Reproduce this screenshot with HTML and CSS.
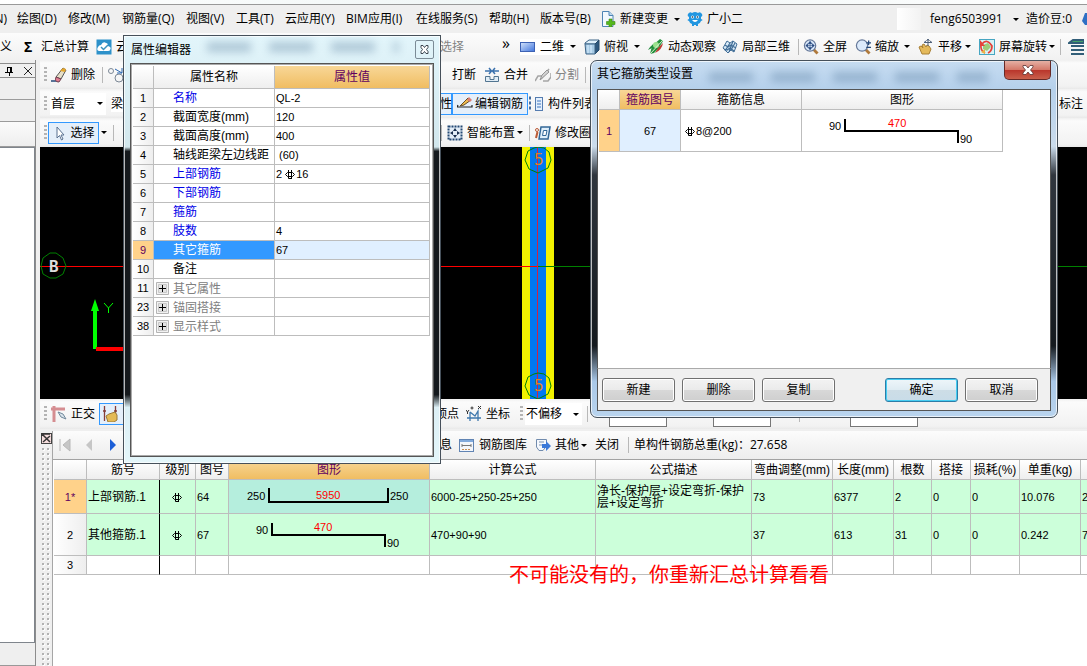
FILE: index.html
```html
<!DOCTYPE html>
<html lang="zh-CN">
<head>
<meta charset="utf-8">
<title>钢筋算量</title>
<link rel="stylesheet" href="styles.css">
</head>
<body>
<svg class="defs" aria-hidden="true">
  <defs>
    <linearGradient id="blue" x1="0" y1="0" x2="1" y2="1"><stop offset="0" stop-color="#d5e4fb"/><stop offset="1" stop-color="#3f74dc"/></linearGradient>
    <symbol id="rebar" viewBox="0 0 11 11"><path d="M2.500 3.500H7.500L9.500 5.500L7.500 7.500H2.500L.5 5.500ZM3.500 1V9.500H6.500M6.500 1V10" fill="none" stroke="currentColor"/></symbol>
    <symbol id="plus" viewBox="0 0 13 13"><path d="M.5 .5H12.500V12.500H.5Z" fill="#f2f2f2" stroke="#b4b4b4"/><path d="M2.500 2.500H10.500V10.500H2.500Z" fill="#e4e4e4" stroke="#c8c8c8"/><path d="M3 6.500H10M6.500 3V10" stroke="#000"/></symbol>
    <symbol id="magnifier" viewBox="0 0 17 17"><path d="M11 11L15.500 15.500" stroke="#b07a3c" stroke-width="3"/><circle cx="7.500" cy="7" r="6" fill="#dceafb" stroke="#66799a" stroke-width="1.300"/></symbol>
    <pattern id="dots" width="5" height="5" patternUnits="userSpaceOnUse"><rect x="1" y="1" width="2" height="2" fill="#b2b2b2"/><path d="M3.500 2V3.500H2" fill="none" stroke="#fff"/></pattern>
  </defs>
</svg>
<div class="app">
  <div class="strip"></div>
  <nav class="menubar">
    <button class="cut">N)</button><button>绘图(D)</button><button>修改(M)</button><button>钢筋量(Q)</button><button>视图(V)</button><button>工具(T)</button><button>云应用(Y)</button><button>BIM应用(I)</button><button>在线服务(S)</button><button>帮助(H)</button><button>版本号(B)</button>
    <button><svg class="icon" viewBox="0 0 16 16"><path d="M2.500 .5H9L13 4.500V15.500H2.500Z" fill="#f2f8fe" stroke="#4e84b4"/><path d="M9 .5V4.500H13" fill="#bdd8ef" stroke="#4e84b4"/><path d="M9 8H12V10.500H15V13.500H12V16H9V13.500H6.500V10.500H9Z" fill="#55b81b" stroke="#3d8c15" stroke-width=".6"/></svg>新建变更</button><i class="arrow"></i>
    <button><svg class="icon" viewBox="0 0 16 16"><path d="M1 3Q3 0 5 2Q8 0 11 2Q13 0 15 3Q16 5 14 6V8Q17 9 14 10Q13 13 11 13V15H9V14H7V15H5V13Q3 13 2 10Q-1 9 2 8V6Q0 5 1 3Z" fill="#2296e0"/><circle cx="5.500" cy="6" r="1.500" fill="#fff"/><circle cx="10.500" cy="6" r="1.500" fill="#fff"/><circle cx="5.500" cy="6" r=".8" fill="#123"/><circle cx="10.500" cy="6" r=".8" fill="#123"/><path d="M5 9Q8 13 11 9Z" fill="#fff"/></svg>广小二</button>
    <span class="user-gap"></span><button>feng6503991</button><i class="arrow"></i><button>造价豆:0</button><svg class="icon" viewBox="0 0 16 16"><path d="M0 10L3 2H8V14H3Z" fill="#2d6fc4"/></svg>
  </nav>

  <div class="viewbar">
    <button>义</button><button class="sigma">Σ</button><button>汇总计算</button>
    <button><svg class="icon" viewBox="0 0 16 16"><rect x=".5" y=".5" width="15" height="15" fill="#2d91ca"/><path d="M3 12Q0 11 2 8Q3 6 5 6Q7 2 10 4Q12 4 12 7Q16 8 14 11Q14 12 12 12Z" fill="#fff"/><path d="M5 8L7.500 10.500L12 6" fill="none" stroke="#3a91bd" stroke-width="1.500"/></svg>云</button>
    <button class="muted">选择</button><span class="more">»</span>
    <button class="lit"><svg class="icon" viewBox="0 0 16 16"><rect x=".5" y="3.500" width="14" height="9" fill="url(#blue)" stroke="#3d62b4"/></svg>二维</button><i class="arrow"></i>
    <button><svg class="icon" viewBox="0 0 16 16"><path d="M1 4L5 1H15L11 5H1Z" fill="#dff0fb" stroke="#3d6487"/><path d="M11 5L15 1V11L11 15Z" fill="#2d587e" stroke="#254968"/><path d="M1 5H11V15H2Z" fill="#a7cae4" stroke="#3d6487"/><path d="M4 6V14M7 6V14" stroke="#dbefff"/></svg>俯视</button><i class="arrow"></i>
    <button><svg class="icon" viewBox="0 0 16 16"><path d="M2 15L4 7L12 0L15 2L11 9L6 14Z" fill="#24913d"/><path d="M0 11Q4 4 11 3L6 8Z" fill="#238d3d"/><path d="M15 4Q14 11 7 14L10 9Z" fill="#bf3c33"/><circle cx="8" cy="6" r="3" fill="#9be28e"/><path d="M2 15L15 1" stroke="#d9eed0"/></svg>动态观察</button>
    <button><svg class="icon" viewBox="0 0 16 16"><path d="M1 9L5 2L8 4L11 2L15 5L12 13L9 11L6 14Z" fill="#d8eaf8" stroke="#416d96"/><path d="M3 6L6 8L9 6L14 9M2 10L5 11L8 9L12 12M8 4L3 12M11 2L7 13M13 4L9 11" fill="none" stroke="#416d96" stroke-width="1.200"/></svg>局部三维</button><i class="sep"></i>
    <button><svg class="icon" viewBox="0 0 17 17"><use href="#magnifier"/><path d="M3.500 7H11.500M7.500 3V11M3 7L5 5V9ZM12 7L10 5V9ZM7.500 2.500L5.500 5H9.500ZM7.500 11.500L5.500 9H9.500Z" fill="#25477f" stroke="#25477f" stroke-width=".6"/></svg>全屏</button>
    <button><svg class="icon" viewBox="0 0 17 17"><use href="#magnifier"/><path d="M12 4H17M14.500 1.500V6.500M12 9H17" stroke="#244879" stroke-width="1.300"/></svg>缩放</button><i class="arrow"></i>
    <button><svg class="icon" viewBox="0 0 16 16"><path d="M1 8L3 7L5 9L4 6L6 5L8 8L9 6L11 7L13 10L11 15H4Z" fill="#e4b95a" stroke="#a98035"/><path d="M6 3.500H14M10 0V7M6 3.500L8 2M14 3.500L12 2M10 0L8.500 2M10 0L11.500 2" stroke="#50627b" fill="none"/></svg>平移</button><i class="arrow"></i>
    <button><svg class="icon" viewBox="0 0 16 16"><rect x=".5" y=".5" width="15" height="15" fill="#d9f3f6" stroke="#47a6c2"/><path d="M4 6L9 4L12 8L8 12L4 10Z" fill="#9dcc7a"/><path d="M3 5Q8 -1 13 7Q13 12 9 14M2 6Q1 11 6 14" fill="none" stroke="#e5413a" stroke-width="1.700"/><path d="M1 1V7H6Z" fill="#e5413a"/><path d="M2 13L6 10V15Z" fill="#ecb244"/></svg>屏幕旋转</button><i class="arrow"></i><i class="sep"></i>
    <svg class="icon" viewBox="0 0 16 16"><path d="M5 1H16V4H1ZM3 7H16M3 11H16M3 15H16" stroke="#315e78" stroke-width="2" fill="#45a46a"/></svg>
  </div>

  <div class="main">
    <aside class="dock">
      <header><svg class="icon" viewBox="0 0 16 16"><path d="M5.500 4V9M8.500 4V9M5 4.500H10M3 9.500H11M7.500 10V13" fill="none" stroke="#000"/><path d="M9 4V9" stroke="#000" stroke-width="2"/></svg><svg class="icon" viewBox="0 0 16 16"><path d="M4 4L12 12M12 4L4 12" stroke="#222"/></svg></header>
      <div class="dock-tab"></div><div class="dock-tab"></div><div class="dock-tab fade"></div>
      <div class="dock-list"></div>
      <div class="dock-foot"></div>
    </aside>

    <section class="work">
      <div class="tools edit-tools">
        <i class="grip"></i><button><svg class="icon" viewBox="0 0 16 16"><path d="M0 14H8" stroke="#244879" stroke-width="1.500"/><path d="M5 10L12 1L15 3L10 12Z" fill="#e6dfc7" stroke="#555"/><path d="M9 4L14 5L15 2L12 1Z" fill="#e2a52d"/><path d="M5 10L10 12L8 15Q3 15 5 10Z" fill="#e17d92" stroke="#704150"/></svg>删除</button><i class="sep"></i>
        <svg class="icon" viewBox="0 0 16 16"><circle cx="3" cy="4" r="2.500" fill="none" stroke="#7b8795"/><circle cx="11" cy="11" r="4" fill="none" stroke="#7b8795"/><path d="M7 2L14 6M14 1V6H9" stroke="#2a66b0" fill="none"/></svg>
        <svg class="icon" viewBox="0 0 16 16"><path d="M1 4H7M5 1L7.500 4L5 7" fill="none" stroke="#366eac" stroke-width="1.500"/><path d="M-6 9.500H6V14.500H-6Z" fill="#e4f0fa" stroke="#587b99"/></svg><button>打断</button>
        <button><svg class="icon" viewBox="0 0 16 16"><path d="M1 4H7M5 1L7.500 4L5 7M15 4H9M11 1L8.500 4L11 7" fill="none" stroke="#3b71ad" stroke-width="1.500"/><path d="M1.500 9.500H6V12.500H10V9.500H14.500V14.500H1.500Z" fill="#e1edf6" stroke="#527591"/></svg>合并</button>
        <button class="muted"><svg class="icon" viewBox="0 0 16 16"><path d="M0 14L3 9H7M6 12L14 2M8 14H13L16 10V6" fill="none" stroke="#a5a5a5" stroke-width="1.500"/><path d="M5 13L7 8L12 3L14 5Z" fill="#d3d3d3" stroke="#969696"/></svg>分割</button><i class="sep"></i>
      </div>
      <div class="tools member-tools">
        <i class="grip"></i><label class="pick"><select aria-label="楼层"><option>首层</option></select><i class="arrow"></i></label><button class="lit">梁</button>
        <button class="on">属性</button>
        <button class="on"><svg class="icon" viewBox="0 0 16 16"><path d="M1 9L0 11H15V9" stroke="#222" stroke-width="1.200" fill="none"/><path d="M3 10L11 2L14 4L7 9Z" fill="#f0bc4e" stroke="#664d28"/><path d="M10 4L12 1L15 4L13 6Z" fill="#db7e75"/></svg>编辑钢筋</button>
        <button><svg class="icon" viewBox="0 0 16 16"><path d="M1 2H4M1 7H4M1 12H4" stroke="#456c9d" stroke-width="3" stroke-dasharray="2 1"/><rect x="7.500" y="1.500" width="7" height="13" fill="#e4f0fd" stroke="#557cb0"/><path d="M9 5H13M9 8H13M9 11H13" stroke="#3f75bd"/></svg>构件列表</button>
        <button class="cut">标注</button>
      </div>
      <div class="tools draw-tools">
        <i class="grip"></i><button class="on"><svg class="icon" viewBox="0 0 16 16"><path d="M5 2V13L7.500 10.500L9.500 15L11 14L9 10H12Z" fill="#fff" stroke="#587090"/></svg>选择</button><i class="arrow"></i><i class="sep"></i>
        <i class="sep"></i><button><svg class="icon" viewBox="0 0 16 16"><rect x="1.500" y="1.500" width="13" height="13" fill="#e3edf7" stroke="#234974" stroke-width="2" stroke-dasharray="2 1"/><path d="M8 3L10 6H6ZM8 13L10 10H6ZM3 8L6 6V10ZM13 8L10 6V10Z" fill="#172d4d"/></svg>智能布置</button><i class="arrow"></i><i class="sep"></i>
        <button><svg class="icon" viewBox="0 0 16 16"><path d="M6 2H15L13 14H4Z" fill="#dfeffb" stroke="#326797" stroke-width="1.500"/><path d="M8.500 5.500H12L11 10.500H7.500Z" fill="#fff" stroke="#326797"/><circle cx="2" cy="5" r="1.500" fill="none" stroke="#ba5a35"/><path d="M2.500 7L1 13" stroke="#ba5a35" stroke-width="2"/></svg>修改圈</button>
      </div>
      <div class="canvas">
        <svg width="1047" height="252" viewBox="0 0 1047 252">
          <rect x="482" width="32" height="252" fill="#f2f200"/><rect x="490" width="16" height="252" fill="#0078f0"/>
          <path d="M0 119.500H497" stroke="#f00"/><path d="M498 119.500H1047" stroke="#008000"/><path d="M497.500 0V252" stroke="#d42040"/>
          <g fill="none" stroke="#008000"><path d="M488 4L494 1L498 0L504 1L509 5L511 13L508 21L498 26L489 22L485 13Z"/><path d="M488 230L494 227L498 226L504 227L509 231L511 239L508 247L498 252L489 248L485 239Z"/><path d="M1 119L3 111L10 106H16L23 111L26 119L23 127L16 131L10 131L3 127Z"/></g>
          <g class="axis"><text x="494" y="18" fill="#d9822b">5</text><text x="494" y="244" fill="#d9822b">5</text><text x="9" y="125" fill="#ddd" class="strong">B</text></g>
          <path d="M55 160V202" stroke="#0f0" stroke-width="4"/><path d="M55 152L59 164H51Z" fill="#0f0"/><path d="M56 202H110" stroke="#f00" stroke-width="4"/><path d="M64 156L68.500 161L73 156M68.500 161V166" fill="none" stroke="#0f0"/>
        </svg>
      </div>
      <div class="tools snap-tools">
        <i class="grip"></i><button><svg class="icon" viewBox="0 0 16 16"><path d="M0 3H14M3 0V16" stroke="#d58d91" stroke-width="3"/><path d="M7 6L12 8L15 13L10 11Z" fill="#d8e2ea" stroke="#71899b"/></svg>正交</button>
        <button class="on snap" aria-label="捕捉"><svg class="icon" viewBox="0 0 16 16"><path d="M2.500 0V15M13.500 0V8M1 5H4M12 5H15" stroke="#853d39" stroke-width="1.300"/><path d="M4 10L7 8L13 6L15 9V14L12 16H6Z" fill="#e4ba55" stroke="#9b7938"/></svg></button>
        <button>顶点</button><button><svg class="icon" viewBox="0 0 16 16"><path d="M4 6V15M1 12H15M4 6L9 10L12 5V15" fill="none" stroke="#3f78ad" stroke-width="1.300"/><path d="M0 4L1.500 6L3 4M1.500 6V8M12 0L15 3M15 0L12 3" fill="none" stroke="#333"/><circle cx="6" cy="2" r="1" fill="none" stroke="#333"/></svg>坐标</button>
        <i class="grip"></i><label class="pick"><select aria-label="偏移"><option>不偏移</option></select><i class="arrow"></i></label><i class="sep"></i>
        <input class="num" aria-label="X"><input class="num" aria-label="Y"><i class="sep"></i><input class="num wide" aria-label="旋转角度">
      </div>

      <div class="rebar">
        <div class="splitter"><svg class="icon" viewBox="0 0 11 11"><rect x=".5" y=".5" width="10" height="10" fill="#f6dddd" stroke="#444"/><path d="M1 3V1H9M2 2L9 9M9 3L2 9" stroke="#333" stroke-width="1.500" fill="none"/></svg><svg class="dots"><rect width="100%" height="100%" fill="url(#dots)"/></svg></div>
        <div class="rebar-body">
          <div class="rebar-tools">
            <svg class="icon" viewBox="0 0 14 14"><path d="M2 1V13M12 1L5 7L12 13Z" fill="#c6c6c6" stroke="#b8b8b8"/></svg>
            <svg class="icon" viewBox="0 0 14 14"><path d="M10 1L4 7L10 13Z" fill="#c6c6c6"/></svg>
            <svg class="icon" viewBox="0 0 14 14"><path d="M4 1L10 7L4 13Z" fill="#1c5fd7"/></svg>
            <button>信息</button>
            <button><svg class="icon" viewBox="0 0 16 16"><rect x=".5" y="2.500" width="14" height="12" fill="#f3f6fb" stroke="#6184b3"/><path d="M1 3H14V5H1Z" fill="#80a9dc"/><path d="M3 7V10M3 8.500H12M12 7V10" stroke="#777" fill="none"/><path d="M3 12.500H12" stroke="#c88d52" stroke-dasharray="2 1"/></svg>钢筋图库</button>
            <button><svg class="icon" viewBox="0 0 16 16"><path d="M1.500 2.500H11.500V9L8 13.500H4L1.500 10Z" fill="#f5f8fd" stroke="#718bad"/><path d="M4 5H9M4 8H8" stroke="#7b91ae"/><path d="M7 7H11V4L16 9L11 14V11H7Z" fill="#3b79d8"/></svg>其他</button><i class="arrow"></i>
            <button>关闭</button><i class="sep"></i><span>单构件钢筋总重(kg)：27.658</span>
          </div>
          <table class="grid">
            <colgroup><col class="w33"><col class="w73"><col class="w36"><col class="w33"><col class="w201"><col class="w166"><col class="w156"><col class="w81"><col class="w61"><col class="w38"><col class="w39"><col class="w49"><col class="w61"><col></colgroup>
            <thead><tr><th></th><th>筋号</th><th>级别</th><th>图号</th><th class="hot">图形</th><th>计算公式</th><th>公式描述</th><th>弯曲调整(mm)</th><th>长度(mm)</th><th>根数</th><th>搭接</th><th>损耗(%)</th><th>单重(kg)</th><th></th></tr></thead>
            <tbody>
              <tr class="green h34"><th class="cur">1*</th><td class="name">上部钢筋.1</td><td class="mid"><svg class="rb"><use href="#rebar"/></svg></td><td>64</td><td class="pic teal"><svg width="200" height="33"><path d="M40 8V22H159V8" class="bar"/><text x="18" y="20">250</text><text x="87" y="19" class="red">5950</text><text x="161" y="20">250</text></svg></td><td>6000-25+250-25+250</td><td class="wrap">净长-保护层+设定弯折-保护层+设定弯折</td><td>73</td><td>6377</td><td>2</td><td>0</td><td>0</td><td>10.076</td><td>2</td></tr>
              <tr class="green h42"><th>2</th><td class="name">其他箍筋.1</td><td class="mid"><svg class="rb"><use href="#rebar"/></svg></td><td>67</td><td class="pic"><svg width="200" height="41"><path d="M43 9V21H156V33" class="bar"/><text x="27" y="20">90</text><text x="85" y="17" class="red">470</text><text x="158" y="33">90</text></svg></td><td>470+90+90</td><td></td><td>37</td><td>613</td><td>31</td><td>0</td><td>0</td><td>0.242</td><td>7</td></tr>
              <tr class="h19"><th>3</th><td class="name"></td><td></td><td></td><td></td><td></td><td></td><td></td><td></td><td></td><td></td><td></td><td></td><td></td></tr>
            </tbody>
          </table>
        </div>
      </div>
    </section>
  </div>

  <section class="window props" aria-label="属性编辑器">
    <header><h2>属性编辑器</h2><i class="ghost"></i><button class="mini" aria-label="关闭"><svg width="9" height="9" viewBox="0 0 9 9"><path d="M1 .5H3L4.500 2.500L6 .5H8V2.500L6.500 4.500L8 6.500V8.500H6L4.500 6.500L3 8.500H1V6.500L2.500 4.500L1 2.500Z" fill="#fff" stroke="#3d4650"/></svg></button></header>
    <div class="pane">
      <table class="grid">
        <colgroup><col class="w21"><col class="w121"><col class="w155"></colgroup>
        <thead><tr><th></th><th>属性名称</th><th class="hot">属性值</th></tr></thead>
        <tbody>
          <tr><th>1</th><td class="link">名称</td><td>QL-2</td></tr>
          <tr><th>2</th><td>截面宽度(mm)</td><td>120</td></tr>
          <tr><th>3</th><td>截面高度(mm)</td><td>400</td></tr>
          <tr><th>4</th><td>轴线距梁左边线距</td><td>&nbsp;(60)</td></tr>
          <tr><th>5</th><td class="link">上部钢筋</td><td>2 <svg class="rb"><use href="#rebar"/></svg>16</td></tr>
          <tr><th>6</th><td class="link">下部钢筋</td><td></td></tr>
          <tr><th>7</th><td class="link">箍筋</td><td></td></tr>
          <tr><th>8</th><td class="link">肢数</td><td>4</td></tr>
          <tr class="picked"><th class="cur">9</th><td>其它箍筋</td><td>67</td></tr>
          <tr><th>10</th><td>备注</td><td></td></tr>
          <tr class="fold"><th>11</th><td><button aria-label="展开"><svg width="13" height="13"><use href="#plus"/></svg></button>其它属性</td><td></td></tr>
          <tr class="fold"><th>23</th><td><button aria-label="展开"><svg width="13" height="13"><use href="#plus"/></svg></button>锚固搭接</td><td></td></tr>
          <tr class="fold"><th>38</th><td><button aria-label="展开"><svg width="13" height="13"><use href="#plus"/></svg></button>显示样式</td><td></td></tr>
        </tbody>
      </table>
    </div>
  </section>

  <section class="window stirrup" role="dialog" aria-label="其它箍筋类型设置">
    <header><h2>其它箍筋类型设置</h2><i class="ghost"></i><button class="close" aria-label="关闭"><svg width="12" height="10" viewBox="0 0 12 10"><path d="M1 .5H4L6 3L8 .5H11V2L8.500 5L11 8V9.500H8L6 7L4 9.500H1V8L3.500 5L1 2Z" fill="#fff" stroke="#5b3434" stroke-width=".8"/></svg></button></header>
    <div class="pane">
      <table class="grid">
        <colgroup><col class="w21"><col class="w61"><col class="w121"><col class="w201"></colgroup>
        <thead><tr><th></th><th class="hot">箍筋图号</th><th>箍筋信息</th><th>图形</th></tr></thead>
        <tbody><tr class="h42"><th class="cur">1</th><td class="mid pale">67</td><td><svg class="rb"><use href="#rebar"/></svg>8@200</td><td class="pic"><svg width="200" height="41"><path d="M43 9V21H156V33" class="bar"/><text x="27" y="20">90</text><text x="86" y="17" class="red">470</text><text x="158" y="33">90</text></svg></td></tr></tbody>
      </table>
    </div>
    <footer><button>新建</button><button>删除</button><button>复制</button><span></span><button class="default">确定</button><button>取消</button></footer>
  </section>

  <p class="note">不可能没有的，你重新汇总计算看看</p>
</div>
</body>
</html>
```

FILE: styles.css
```css
* { box-sizing: border-box; }
body { margin: 0; background: #efefef; color: #000; font: 12px/16px "Open Sans", "Noto Sans CJK SC", sans-serif; }
button, select, input { font: inherit; color: inherit; margin: 0; padding: 0; border: 0; background: none; border-radius: 0; }
button { display: flex; align-items: center; gap: 4px; white-space: nowrap; text-align: left; }
h2 { margin: 0; font-size: 12px; font-weight: 400; }
.defs { position: absolute; width: 0; height: 0; }
.app { position: relative; display: flex; flex-direction: column; min-height: 100vh; overflow: hidden; }
.strip { height: 5px; background: linear-gradient(90deg, #fff, #eef5f5 50%, #fff); border-bottom: 1px solid #999; }
.icon { width: 16px; height: 16px; flex: none; }
.muted { color: #838383; }
.arrow { width: 0; height: 0; border: 3px solid transparent; border-top-color: #000; border-bottom: 0; flex: none; }
.sep { width: 1px; height: 16px; background: #b8b8b8; }
.grip { width: 3px; height: 16px; background: repeating-linear-gradient(#b4b4b4 0 2px, transparent 2px 4px); }

.menubar, .viewbar, .tools, .rebar-tools { display: grid; align-items: center; overflow: hidden; white-space: nowrap; }
.menubar { height: 28px; grid-template-columns: 17px 51px 54px 64px 50px 49px 61px 70px 73px 51px 60px 74px 13px 210px 33px 83px 13px 56px 16px; background: #efefef; }
.menubar .cut { justify-content: flex-end; padding-right: 10px; }
.user-gap { width: 24px; height: 22px; background: linear-gradient(90deg, #fff, #f2f2f2); }
.viewbar { height: 27px; grid-template-columns: 24px 17px 55px 344px 62px 18px 50px 14px 50px 14px 74px 76px 5px 52px 49px 14px 47px 14px 70px 11px 8px 16px; background: linear-gradient(#fcfcfc, #f1f1f1); }
.viewbar .sigma { font-weight: 700; font-size: 14px; }
.more { font-size: 16px; line-height: 16px; padding-bottom: 8px; }
.lit { background: #fff; }

.main { flex: 1; display: grid; grid-template-columns: 36px minmax(0, 1fr); column-gap: 4px; }
.dock { display: flex; flex-direction: column; border-right: 1px solid #8c8c8c; padding-top: 3px; background: #efefef; }
.dock header { display: flex; gap: 2px; padding-left: 2px; height: 15px; border: 1px solid #8c8c8c; border-width: 1px 0; align-items: center; }
.dock-tab { height: 22px; border-bottom: 1px solid #9b9b9b; }
.dock-tab.fade { height: 25px; background: linear-gradient(#fbfbfb, #eee); }
.dock-list { flex: 1; border: 1px solid #7f858c; border-left: 0; background: #fff; }
.dock-foot { height: 23px; border-bottom: 1px solid #999; }

.work { display: flex; flex-direction: column; min-width: 0; }
.tools { height: 29px; background: linear-gradient(#f0f0f0, #fbfbfb 10%, #f2f2f2 90%, #e9e9e9); padding-left: 4px; flex: none; }
.edit-tools { grid-template-columns: 7px 51px 6px 324px 20px 32px 51px 50px 1px; }
.member-tools { grid-template-columns: 6px 61px 317px 24px 76px 527px 44px; }
.member-tools .cut { padding-left: 4px; }
.draw-tools { grid-template-columns: 4px 53px 12px 328px 6px 70px 12px 6px 60px; }
.canvas { flex: none; height: 252px; background: #000; overflow: hidden; }
.canvas svg { display: block; }
.axis { font: 16px "DejaVu Sans Mono", monospace; }
.axis .strong { font-weight: 700; }
.snap-tools { height: 30px; margin-bottom: 2px; grid-template-columns: 7px 48px 336px 31px 54px 5px 62px 22px 104px 86px 51px 68px; }
.tools .on { height: 22px; border: 1px solid #3399ff; background: #e5effa; padding: 0 2px; justify-content: center; }
.tools .snap { justify-self: start; width: 40px; justify-content: flex-start; }
.member-tools .on { gap: 2px; }
.draw-tools .on { width: 51px; gap: 2px; }
.pick { display: flex; align-items: center; justify-content: space-between; height: 22px; background: #fff; margin-right: 5px; padding: 0 3px 0 1px; min-width: 0; }
.pick select { appearance: none; min-width: 0; }
.num { width: 58px; height: 26px; border: 1px solid #777; background: #fff; }
.wide { width: 68px; }

.rebar { flex: 1; display: grid; grid-template-columns: 12px minmax(0, 1fr); }
.splitter { display: flex; flex-direction: column; padding: 2px 1px 0; gap: 3px; }
.splitter .icon { width: 11px; height: 11px; }
.dots { flex: 1; width: 10px; min-height: 0; height: 0; }
.rebar-body { display: flex; flex-direction: column; border-left: 1px solid #a6a6a6; background: #fff; overflow: hidden; min-width: 0; }
.rebar-tools { height: 29px; grid-template-columns: 24px 24px 322px 31px 76px 46px 14px 33px 6px 1fr; padding-left: 5px; background: linear-gradient(#fcfcfc, #ededed); border-bottom: 1px solid #a2a2a2; }
.rebar-tools > .icon { width: 14px; height: 14px; }

.grid { border-collapse: separate; border-spacing: 0; table-layout: fixed; font: 11px/12px "Liberation Sans", "Noto Sans CJK SC", sans-serif; }
.grid th, .grid td { border: solid #bdbdbd; border-width: 0 1px 1px 0; padding: 0 1px; font-weight: 400; white-space: nowrap; overflow: hidden; text-align: left; }
.grid th { background: linear-gradient(90deg, #fff, #eee); text-align: center; padding: 0; }
.grid thead th { background: linear-gradient(#fff, #eee); font-size: 12px; }
.grid thead .hot { background: linear-gradient(#f8d797, #f0bd62); color: #600060; }
.grid .cur { background: #ffd28a; color: #600060; }
.grid .mid { text-align: center; }
.grid .pale { background: #e0efff; }
.grid .pic { padding: 0; }
.pic svg { display: block; font-size: 11px; }
.bar { fill: none; stroke: #000; stroke-width: 2px; }
.red { fill: #f00; }
.rb { width: 11px; height: 11px; vertical-align: -2px; }
.rebar .grid { width: 100%; margin-left: 1px; }
.rebar thead tr { height: 20px; }
.rebar .green td { background: #ccffda; }
.rebar .green .teal { background: #b5eedd; }
.rebar .grid .name { border-right-color: #000; font-size: 12px; }
.rebar .grid .wrap { white-space: normal; font-size: 12px; }
.h34 { height: 34px; } .h42 { height: 42px; } .h19 { height: 19px; }
.w21 { width: 21px; } .w33 { width: 33px; } .w36 { width: 36px; } .w38 { width: 38px; } .w39 { width: 39px; } .w49 { width: 49px; } .w61 { width: 61px; } .w73 { width: 73px; } .w81 { width: 81px; } .w121 { width: 121px; } .w155 { width: 155px; } .w156 { width: 156px; } .w166 { width: 166px; } .w201 { width: 201px; }

.window { position: absolute; display: flex; flex-direction: column; border: 1px solid #46505a; padding: 0 6px 6px; box-shadow: inset 0 0 0 1px rgba(255, 255, 255, .7); }
.window header { display: flex; align-items: center; flex: none; }
.window .pane { flex: 1; background: #fff; border: 1px solid #555; }
.ghost { flex: 1; height: 10px; margin: 0 16px; background: repeating-linear-gradient(90deg, #3c6488 0 44px, transparent 44px 62px); opacity: .3; filter: blur(4px); }
.props { left: 123px; top: 35px; width: 318px; height: 429px; background: linear-gradient(#e2f5fb, #d2e7ed 26%, #15191d 27%, #15191d 84%, #dceff5 87%, #e4f6fa); }
.props header { height: 27px; padding-left: 1px; }
.props .ghost { margin-bottom: 6px; }
.mini { width: 19px; height: 19px; border: 1px solid #7b8b96; border-radius: 2px; justify-content: center; }
.props .pane { padding: 2px 0 0 2px; box-shadow: inset 0 0 0 1px #aaa; }
.props .grid { width: 297px; }
.props thead tr { height: 23px; }
.props tbody tr { height: 19px; }
.props tbody td:nth-child(2) { padding-left: 19px; font-size: 12px; }
.props .link { color: #0000e8; }
.props .picked td { background: #e0efff; }
.props .picked td:nth-child(2) { background: #3399ff; color: #fff; }
.props .fold td:nth-child(2) { padding-left: 2px; color: #808080; }
.fold button { display: inline-block; height: 13px; margin-right: 4px; vertical-align: -2px; }
.fold svg { display: block; }

.stirrup { left: 590px; top: 60px; width: 468px; height: 358px; border-radius: 7px; background: linear-gradient(#c6dcf1, #b5d0eb 8%, #cbdcec 24%, #30363e 32%, #14191e 80%, #a9c8e8 90%, #b9d4ee); }
.stirrup header { height: 28px; align-items: flex-start; }
.stirrup h2 { padding-top: 5px; }
.stirrup .ghost { margin-top: 11px; }
.close { width: 47px; height: 19px; justify-content: center; border: 1px solid #672a27; border-top: 0; border-radius: 0 0 5px 5px; background: linear-gradient(#e5b0a4, #d4796a 48%, #b9352b 50%, #c9604c); }
.stirrup .pane { padding-left: 1px; border-bottom-color: #aaa; }
.stirrup .grid { width: 404px; }
.stirrup thead tr { height: 20px; }
.stirrup tbody td:nth-child(3) { padding-left: 4px; }
.stirrup footer { display: flex; align-items: center; gap: 7px; height: 42px; padding: 0 12px 0 4px; background: #f0f0f0; border: 1px solid #555; border-top: 0; flex: none; }
.stirrup footer span { flex: 1; }
.stirrup footer button { width: 73px; height: 24px; justify-content: center; border: 1px solid #707070; border-radius: 3px; background: linear-gradient(#f3f3f3, #ebebeb 48%, #d8d8d8 50%, #cfcfcf); box-shadow: inset 0 0 0 1px #fff; }
.stirrup footer .default { border-color: #2c7da8; background: linear-gradient(#eef6fa, #dfecf3 48%, #cddde6 50%, #c8dce8); box-shadow: inset 0 0 0 1px #45cdf2; }
.note { position: absolute; left: 509px; top: 563px; margin: 0; color: #f00; font-size: 20px; line-height: 24px; font-weight: 400; white-space: nowrap; }
```
